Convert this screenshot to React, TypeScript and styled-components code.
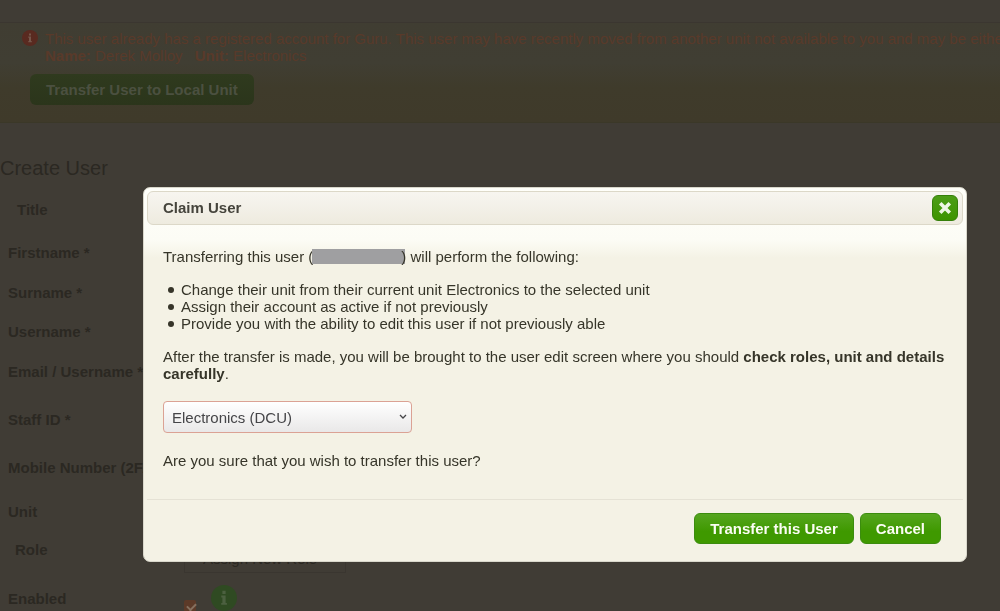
import React from "react";
import styled, { createGlobalStyle } from "styled-components";

const GlobalStyle = createGlobalStyle`
  * { box-sizing: border-box; }
  body {
    margin: 0;
    background: #403c35;
    color: #2b2822;
    font: 15px/17px "Liberation Sans", Arial, sans-serif;
    overflow: hidden;
  }
  button, select, input { font: inherit; }
`;

const Page = styled.main`
  padding-top: 22px;
`;

const Notice = styled.section`
  height: 101px;
  padding: 7px 0 0 22px;
  border-top: 1px solid #3b3630;
  border-bottom: 1px solid #3b3828;
  background: linear-gradient(#403d32, #403e33 40%, #3f3b2b 65%, #3f3a2a);
  overflow: hidden;
`;

const NoticeRow = styled.div`
  display: flex;
  gap: 7px;
`;

const NoticeText = styled.p`
  margin: 0;
  color: #593a2a;
  white-space: nowrap;
`;

const Unit = styled.span`
  margin-left: 8px;
`;

const TransferLocal = styled.button`
  display: block;
  margin: 10px 0 0 8px;
  height: 31px;
  padding: 0 16px;
  border: 0;
  border-radius: 6px;
  background: linear-gradient(#2f3a1e, #2b351b);
  color: #4b5040;
  font-weight: bold;
`;

const PageTitle = styled.h1`
  margin: 33px 0 8px;
  font-size: 20px;
  line-height: 24px;
  font-weight: normal;
`;

const Form = styled.form`
  display: flex;
  flex-direction: column;
`;

const Row = styled.div<{ $height: number; $indent?: number }>`
  display: grid;
  grid-template-columns: ${(p) => 184 - (p.$indent ?? 8)}px auto auto;
  grid-template-rows: 100%;
  justify-content: start;
  align-items: center;
  height: ${(p) => p.$height}px;
  padding-left: ${(p) => p.$indent ?? 8}px;
  white-space: nowrap;
`;

const Label = styled.label`
  font-weight: bold;
`;

const Field = styled.input`
  width: 162px;
  height: 30px;
  border: 1px solid #3a3630;
  background: transparent;
`;

const RoleSelect = styled.select`
  width: 162px;
  height: 48px;
  padding: 18px 18px 0;
  border: 1px solid #3a3630;
  background: transparent;
  color: #2b2822;
  appearance: none;
`;

const EnabledBox = styled.input`
  appearance: none;
  width: 12px;
  height: 12px;
  margin: 16px 15px 0 0;
  border-radius: 2px;
  background: #5c3a28;

  &:checked::after {
    content: "";
    display: block;
    width: 7px;
    height: 4px;
    margin: 3px 0 0 3px;
    border: solid #86705f;
    border-width: 0 0 2px 2px;
    transform: rotate(-45deg);
  }
`;

const Overlay = styled.div`
  position: fixed;
  inset: 0;
  padding: 187px 33px 0 143px;
`;

const Dialog = styled.section`
  padding: 3px;
  border: 1px solid #d9d7cb;
  border-radius: 7px;
  background: linear-gradient(#fffffa, #fcfcf5 52px, #f4f2e5 70px);
  color: #363529;
`;

const DialogHeader = styled.header`
  display: flex;
  align-items: center;
  justify-content: space-between;
  height: 34px;
  padding: 0 4px 0 15px;
  border: 1px solid #dcd8c8;
  border-radius: 6px;
  background: linear-gradient(#f7f5f0, #eeebdf);
`;

const DialogTitle = styled.h2`
  margin: 0;
  font-size: 15px;
  line-height: 18px;
  color: #45443c;
`;

const Close = styled.button`
  display: flex;
  align-items: center;
  justify-content: center;
  width: 26px;
  height: 26px;
  padding: 0;
  border: 1px solid #357f0a;
  border-radius: 6px;
  background: linear-gradient(#4c9d17, #3d9400);
`;

const Body = styled.div`
  padding: 23px 15px 30px 16px;
`;

const Text = styled.p`
  margin: 0 0 16px;
  &:last-child { margin-bottom: 0; }
`;

const Redacted = styled.span`
  display: inline-block;
  width: 93px;
  height: 15px;
  margin: -2px -4px 0 -1px;
  vertical-align: -2px;
  background: #9f9fa1;
`;

const Effects = styled.ul`
  margin: 0 0 16px;
  padding: 0 0 0 5px;
  list-style: none;
`;

const Effect = styled.li`
  display: flex;
  align-items: center;
  gap: 7px;

  &::before {
    content: "";
    width: 6px;
    height: 6px;
    border-radius: 50%;
    background: #363529;
  }
`;

const SelectWrap = styled.div`
  position: relative;
  width: 249px;
  margin: 19px 0;
  svg { position: absolute; right: 5px; top: 12px; pointer-events: none; }
`;

const UnitSelect = styled.select`
  display: block;
  width: 100%;
  height: 32px;
  padding: 0 8px;
  border: 1px solid #dba294;
  border-radius: 4px;
  background: linear-gradient(#ffffff, #e9e8e8);
  color: #454548;
  appearance: none;
`;

const Footer = styled.footer`
  display: flex;
  justify-content: flex-end;
  gap: 6px;
  padding: 13px 22px 14px;
  border-top: 1px solid #e5e2d5;
`;

const Action = styled.button`
  height: 31px;
  padding: 0 15px;
  border: 1px solid #3b8c0e;
  border-radius: 6px;
  background: linear-gradient(#55a51f, #3f9900 60%);
  color: #fbfdf4;
  font-weight: bold;
`;

const InfoSvg = styled.svg`
  flex: none;
`;

const InfoIcon = ({ size, fill, mark }: { size: number; fill: string; mark: string }) => (
  <InfoSvg width={size} height={size} viewBox="0 0 16 16" aria-hidden="true">
    <circle cx="8" cy="8" r="8" fill={fill} />
    <path d="M7 3.5h2v2H7zM6.3 6.5H9v4.5h.8v1.2H6.3V11H7V7.7h-.7z" fill={mark} />
  </InfoSvg>
);

const fields = [
  { id: "title", label: "Title", height: 43, indent: 17 },
  { id: "firstname", label: "Firstname *", height: 43 },
  { id: "surname", label: "Surname *", height: 37 },
  { id: "username", label: "Username *", height: 41 },
  { id: "email", label: "Email / Username *", height: 39 },
  { id: "staff", label: "Staff ID *", height: 57 },
  { id: "mobile", label: "Mobile Number (2FA)", height: 39 },
  { id: "unit", label: "Unit", height: 49 },
];

export default function App() {
  return (
    <>
      <GlobalStyle />
      <Page>
        <Notice>
          <NoticeRow>
            <InfoIcon size={16} fill="#592a20" mark="#75564a" />
            <NoticeText>
              This user already has a registered account for Guru. This user may have recently moved
              from another unit not available to you and may be either
              <br />
              <b>Name:</b> Derek Molloy <Unit><b>Unit:</b> Electronics</Unit>
            </NoticeText>
          </NoticeRow>
          <TransferLocal type="button">Transfer User to Local Unit</TransferLocal>
        </Notice>
        <PageTitle>Create User</PageTitle>
        <Form>
          {fields.map((f) => (
            <Row key={f.id} $height={f.height} $indent={f.indent}>
              <Label htmlFor={f.id}>{f.label}</Label>
              <Field id={f.id} />
            </Row>
          ))}
          <Row $height={26} $indent={15}>
            <Label htmlFor="role">Role</Label>
            <RoleSelect id="role"><option>Assign New Role</option></RoleSelect>
          </Row>
          <Row $height={72}>
            <Label htmlFor="enabled">Enabled</Label>
            <EnabledBox id="enabled" type="checkbox" defaultChecked />
            <InfoIcon size={26} fill="#2f4a22" mark="#4c6040" />
          </Row>
        </Form>
      </Page>
      <Overlay>
        <Dialog role="dialog" aria-labelledby="claim-title">
          <DialogHeader>
            <DialogTitle id="claim-title">Claim User</DialogTitle>
            <Close type="button" aria-label="Close">
              <svg width="14" height="14" viewBox="0 0 14 14" aria-hidden="true">
                <path d="M3.5 3.5l7 7M10.500 3.500l-7 7" stroke="#eef6e4" strokeWidth="3.6" strokeLinecap="square" />
              </svg>
            </Close>
          </DialogHeader>
          <Body>
            <Text>Transferring this user (<Redacted />) will perform the following:</Text>
            <Effects>
              <Effect>Change their unit from their current unit Electronics to the selected unit</Effect>
              <Effect>Assign their account as active if not previously</Effect>
              <Effect>Provide you with the ability to edit this user if not previously able</Effect>
            </Effects>
            <Text>
              After the transfer is made, you will be brought to the user edit screen where you should{" "}
              <b>check roles, unit and details carefully</b>.
            </Text>
            <SelectWrap>
              <UnitSelect aria-label="Unit to transfer to"><option>Electronics (DCU)</option></UnitSelect>
              <svg width="8" height="8" viewBox="0 0 8 8" aria-hidden="true">
                <path d="M1 2l3 3 3-3" fill="none" stroke="#454548" strokeWidth="1.3" />
              </svg>
            </SelectWrap>
            <Text>Are you sure that you wish to transfer this user?</Text>
          </Body>
          <Footer>
            <Action type="button">Transfer this User</Action>
            <Action type="button">Cancel</Action>
          </Footer>
        </Dialog>
      </Overlay>
    </>
  );
}
